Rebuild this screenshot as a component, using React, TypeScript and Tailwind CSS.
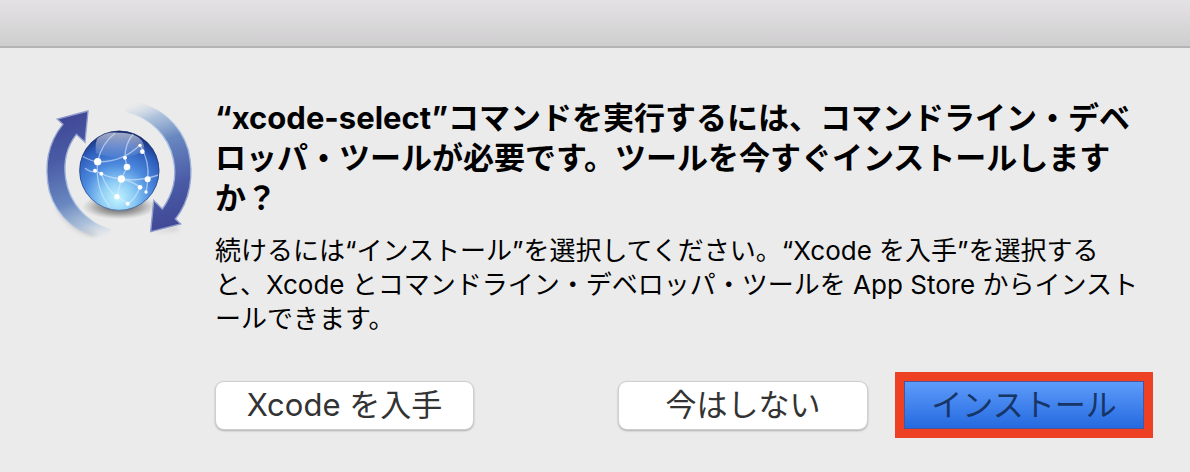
import React from "react";

const font = "font-['Inter','Noto_Sans_CJK_JP',sans-serif]";

function UpdateIcon() {
  return (
    <svg viewBox="0 0 540 480" className="h-40 w-[180px] shrink-0" aria-hidden="true">
      <defs>
        <linearGradient id="leftArrow" gradientUnits="userSpaceOnUse" x1="110" y1="80" x2="235" y2="440">
          <stop offset="0" stopColor="#404896" />
          <stop offset="0.3" stopColor="#4a5ba6" />
          <stop offset="0.65" stopColor="#6988c0" />
          <stop offset="0.85" stopColor="#a0b9d8" stopOpacity="0.8" />
          <stop offset="1" stopColor="#c8d6e4" stopOpacity="0" />
        </linearGradient>
        <linearGradient id="rightArrow" gradientUnits="userSpaceOnUse" x1="425" y1="410" x2="295" y2="45">
          <stop offset="0" stopColor="#404896" />
          <stop offset="0.3" stopColor="#4a5ba6" />
          <stop offset="0.65" stopColor="#6988c0" />
          <stop offset="0.85" stopColor="#a0b9d8" stopOpacity="0.8" />
          <stop offset="1" stopColor="#c8d6e4" stopOpacity="0" />
        </linearGradient>
        <linearGradient id="leftEdge" gradientUnits="userSpaceOnUse" x1="110" y1="80" x2="210" y2="430">
          <stop offset="0" stopColor="#8e99c8" />
          <stop offset="0.7" stopColor="#a8c2e4" />
          <stop offset="1" stopColor="#c8d6e4" stopOpacity="0" />
        </linearGradient>
        <linearGradient id="rightEdge" gradientUnits="userSpaceOnUse" x1="425" y1="410" x2="325" y2="60">
          <stop offset="0" stopColor="#8e99c8" />
          <stop offset="0.7" stopColor="#a8c2e4" />
          <stop offset="1" stopColor="#c8d6e4" stopOpacity="0" />
        </linearGradient>
        <radialGradient id="globe" gradientUnits="userSpaceOnUse" cx="262" cy="325" r="205">
          <stop offset="0" stopColor="#c2f4ff" />
          <stop offset="0.25" stopColor="#8ccbf5" />
          <stop offset="0.5" stopColor="#4c8ade" />
          <stop offset="0.78" stopColor="#2d5bb9" />
          <stop offset="1" stopColor="#122363" />
        </radialGradient>
        <linearGradient id="gloss" x1="0" y1="0" x2="0" y2="1">
          <stop offset="0" stopColor="#fff" stopOpacity="0.6" />
          <stop offset="1" stopColor="#fff" stopOpacity="0.05" />
        </linearGradient>
        <radialGradient id="floor">
          <stop offset="0" stopColor="#333" stopOpacity="0.9" />
          <stop offset="0.6" stopColor="#555" stopOpacity="0.45" />
          <stop offset="1" stopColor="#777" stopOpacity="0" />
        </radialGradient>
        <filter id="soft" x="-20%" y="-20%" width="140%" height="140%">
          <feGaussianBlur stdDeviation="6" />
        </filter>
        <clipPath id="disc">
          <circle cx="268" cy="242" r="119" />
        </clipPath>
      </defs>

      <g fill="#707078" opacity="0.25" filter="url(#soft)">
        <path d="M78 350Q115 425 190 440L200 430Q140 410 100 340Z" />
        <path d="M362 428L450 408L440 422Z" />
      </g>
      <path
        d="M174 63L82 87L99 103C54 158 42 230 58 304C80 382 150 443 240 450L242 418C170 398 117 338 107 265C99 211 112 168 139 133L165 157Z"
        fill="url(#leftArrow)"
      />
      <path
        d="M240 450C150 443 80 382 58 304C42 230 54 158 99 103L82 87L174 63L165 157L139 133C112 168 99 211 107 265C117 338 170 398 242 418"
        fill="none"
        stroke="url(#leftEdge)"
        strokeWidth="4"
      />
      <path
        d="M362 425L452 402L436 387C480 332 493 256 475 180C452 100 382 38 288 29L286 66C362 82 416 138 430 208C442 264 427 315 397 357L371 331Z"
        fill="url(#rightArrow)"
      />
      <path
        d="M288 29C382 38 452 100 475 180C493 256 480 332 436 387L452 402L362 425L371 331L397 357C427 315 442 264 430 208C416 138 362 82 286 66"
        fill="none"
        stroke="url(#rightEdge)"
        strokeWidth="4"
      />

      <ellipse cx="268" cy="350" rx="112" ry="38" fill="url(#floor)" />
      <circle cx="268" cy="242" r="120" fill="url(#globe)" />
      <g clipPath="url(#disc)">
        <path d="M198 190C190 120 230 128 268 128C310 128 345 142 343 180C300 212 245 205 198 190Z" fill="url(#gloss)" />
        <g fill="none" stroke="#d9ecff" strokeWidth="4" opacity="0.6">
          <path d="M155 198Q190 216 203 215Q275 218 330 165" />
          <path d="M255 130Q215 160 203 215Q195 300 240 350" />
          <path d="M165 235Q185 250 195 242L214 251Q240 264 274 267Q330 275 385 255" />
          <path d="M310 132Q285 160 285 203L291 231L274 267L261 320" />
          <path d="M330 165Q360 215 353 268Q352 290 348 306" />
          <path d="M214 251Q230 300 261 320L293 341" />
          <path d="M274 267Q310 275 330 292Q315 330 293 341" />
        </g>
        <g fill="#fff">
          <circle cx="203" cy="215" r="11" />
          <circle cx="291" cy="231" r="10" />
          <circle cx="274" cy="267" r="11" />
          <circle cx="353" cy="268" r="9" />
          <circle cx="337" cy="185" r="7" />
          <circle cx="261" cy="320" r="8" />
          <circle cx="330" cy="292" r="7" />
          <circle cx="348" cy="306" r="5" />
          <circle cx="293" cy="341" r="6" />
          <circle cx="214" cy="251" r="6" />
          <circle cx="195" cy="242" r="6" />
          <circle cx="285" cy="203" r="6" />
          <circle cx="330" cy="166" r="5" />
        </g>
      </g>
      <circle cx="268" cy="242" r="119" fill="none" stroke="#1b2f70" strokeWidth="3" opacity="0.55" />
    </svg>
  );
}

const plainButton =
  "h-[47px] rounded-lg bg-white text-[31px] leading-10 text-[#333] shadow-[0_0_0_1px_#cfcfcf,0_1px_2px_1px_#adadad]";

export default function App() {
  return (
    <div className={`min-h-screen bg-[#ebebeb] text-black ${font}`} lang="ja">
      <header className="h-12 border-b-2 border-[#b5b3b5] bg-linear-to-b from-[#e4e2e4] to-[#cfcecf]" />
      <main className="flex pt-[42px] pr-[37px] pl-[30px]" role="alertdialog" aria-labelledby="title" aria-describedby="detail">
        <UpdateIcon />
        <div className="ml-[5px] min-w-0 grow pt-2">
          <h1 id="title" className="text-[31px] leading-10 font-bold whitespace-nowrap">
            “xcode-select”コマンドを実行するには、コマンドライン・デベ
            <br />
            ロッパ・ツールが必要です。ツールを今すぐインストールします
            <br />
            か？
          </h1>
          <p id="detail" className="mt-4 text-[26px] leading-[34px] whitespace-nowrap">
            続けるには“インストール”を選択してください。“Xcode を入手”を選択する
            <br />
            と、Xcode とコマンドライン・デベロッパ・ツールを App Store からインスト
            <br />
            ールできます。
          </p>
          <div className="mt-9 flex items-center">
            <button type="button" className={`${plainButton} ml-px w-[257px]`}>
              Xcode を入手
            </button>
            <button type="button" className={`${plainButton} mr-7 ml-auto w-[248px]`}>
              今はしない
            </button>
            <div className="border-[9px] border-[#ee4023]">
              <button
                type="button"
                className="block h-12 w-60 bg-linear-to-b from-[#5f9dfb] to-[#2268df] text-[31px] leading-10 text-[#173567] ring-1 ring-[#4a55a0] ring-inset"
              >
                インストール
              </button>
            </div>
          </div>
        </div>
      </main>
    </div>
  );
}
